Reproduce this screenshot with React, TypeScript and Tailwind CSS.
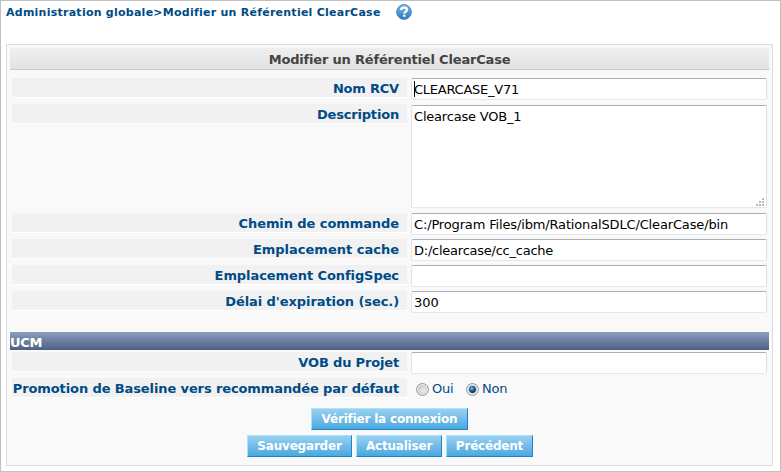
import type { ReactNode } from "react";

const inputBorder =
  "rounded-[2px] border border-t-[#abadb3] border-r-[#dbdfe6] border-b-[#e3e9ef] border-l-[#e2e3ea] bg-white text-[13px] text-black";

function Row({
  label,
  children,
  tall = false,
  tracking = "tracking-[-0.08px]",
}: {
  label: string;
  children: ReactNode;
  tall?: boolean;
  tracking?: string;
}) {
  return (
    <div className={`flex ${tall ? "h-[109px]" : "h-[26px]"}`}>
      <div
        className={`mr-1 h-5 w-[395px] shrink-0 border-b border-white bg-[#f1f1f1] pr-2 text-right text-[13px] leading-[22px] font-bold whitespace-nowrap text-[#004b85] ${tracking}`}
      >
        {label}
      </div>
      {children}
    </div>
  );
}

function Field({ value = "", caret = false, tracking = "" }: { value?: string; caret?: boolean; tracking?: string }) {
  return (
    <div className={`flex h-[22px] w-[356px] items-center pl-[2px] whitespace-pre ${inputBorder}`}>
      {caret && <span className="-mr-px h-4 w-px bg-black" />}
      <span className={`h-[17px] leading-[18px] ${tracking}`}>{value}</span>
    </div>
  );
}

function Button({ children, width }: { children: string; width: string }) {
  return (
    <button
      className={`h-[22px] border border-t-[#a9e4fa] border-r-[#1b86cb] border-b-[#1b86cb] border-l-[#a9e4fa] bg-linear-to-b from-[#99d0f0] to-[#48a8df] text-[12px] leading-[21px] font-bold tracking-[-0.2px] whitespace-nowrap text-white ${width}`}
    >
      {children}
    </button>
  );
}

function Radio({ id, checked = false }: { id: string; checked?: boolean }) {
  return (
    <svg width="13" height="13" viewBox="0 0 13 13">
      <defs>
        <linearGradient id={id} x1="0" y1="0" x2="1" y2="1">
          <stop offset="0" stopColor="#c4c8cc" />
          <stop offset="1" stopColor="#f8f8f8" />
        </linearGradient>
        <radialGradient id={`${id}-dot`} cx=".4" cy=".35" r=".65">
          <stop offset="0" stopColor="#7fd3f5" />
          <stop offset=".5" stopColor="#17679b" />
          <stop offset="1" stopColor="#0a2b48" />
        </radialGradient>
      </defs>
      <circle cx="6.5" cy="6.5" r="5.9" fill="#f7f7f7" stroke="#8b8c8d" strokeWidth="1" />
      <circle cx="6.5" cy="6.5" r="4" fill={`url(#${id})`} stroke="#b4b7ba" strokeWidth=".7" />
      {checked && <circle cx="6.5" cy="6.5" r="3.4" fill={`url(#${id}-dot)`} />}
    </svg>
  );
}

function HelpIcon() {
  return (
    <svg width="16" height="16" viewBox="0 0 16 16">
      <defs>
        <linearGradient id="help" x1="0" y1="0" x2="0" y2="1">
          <stop offset="0" stopColor="#80bae8" />
          <stop offset="1" stopColor="#2876bd" />
        </linearGradient>
      </defs>
      <circle cx="8" cy="8" r="7.4" fill="url(#help)" stroke="#4b8cc5" />
      <path d="M5 6.1C5.1 4.3 6.3 3.6 8 3.6c1.8 0 3 .8 3 2.2 0 1.9-2.6 1.8-2.6 3.7" fill="none" stroke="#fff" strokeWidth="2.2" />
      <rect x="7.1" y="10.6" width="2.4" height="2.2" fill="#fff" />
    </svg>
  );
}

function ResizeGrip() {
  return (
    <svg width="8" height="8" viewBox="0 0 8 8" fill="#b8b8b8">
      {[[6, 0], [3, 3], [6, 3], [0, 6], [3, 6], [6, 6]].map(([x, y]) => (
        <rect key={`${x}-${y}`} x={x} y={y} width="2" height="2" />
      ))}
    </svg>
  );
}

export default function App() {
  return (
    <div className="h-[472px] w-[781px] overflow-hidden border border-[#c0c0c0] bg-white pl-[5px] font-['DejaVu_Sans',Verdana,sans-serif]">
      <div className="flex h-[43px] items-start text-[11px] font-bold text-[#004b85]">
        <span className="mt-1 w-[390px] leading-4 tracking-[0.25px] whitespace-nowrap">Administration globale&gt;Modifier un Référentiel ClearCase</span>
        <div className="mt-[3px]"><HelpIcon /></div>
      </div>
      <div className="h-[422px] w-[767px] border border-[#dcdcdc] bg-[#f9f9f9] px-[3px] pt-[3px]">
        <h1 className="h-[22px] w-[759px] border-b border-[#c8c8c8] bg-linear-to-b from-[#efefef] to-[#e2e2e2] text-center text-[13px] leading-[24px] font-bold tracking-[-0.18px] text-[#444]">
          Modifier un Référentiel ClearCase
        </h1>
        <div className="mt-2 pl-[2px]">
          <Row label="Nom RCV" tracking="tracking-[-0.2px]"><Field value="CLEARCASE_V71" caret tracking="tracking-[-0.25px]" /></Row>
          <Row label="Description" tall tracking="tracking-[-0.18px]">
            <div className={`mt-px flex h-[103px] w-[356px] justify-between pl-[2px] ${inputBorder}`}>
              <span className="mt-[2px] leading-[18px] tracking-[-0.2px]">Clearcase VOB_1</span>
              <div className="self-end px-[2px] pb-px"><ResizeGrip /></div>
            </div>
          </Row>
          <Row label="Chemin de commande"><Field value="C:/Program Files/ibm/RationalSDLC/ClearCase/bin" tracking="tracking-[-0.15px]" /></Row>
          <Row label="Emplacement cache" tracking="tracking-[0px]"><Field value="D:/clearcase/cc_cache" tracking="tracking-[-0.24px]" /></Row>
          <Row label="Emplacement ConfigSpec"><Field /></Row>
          <Row label="Délai d'expiration (sec.)"><Field value="300" /></Row>
        </div>
        <h2 className="mt-[15px] mb-[2px] h-[18px] w-[759px] bg-linear-to-b from-[#8d9ebf] to-[#4d6185] text-[13px] leading-[21px] font-bold tracking-[-0.3px] text-white">UCM</h2>
        <div className="pl-[2px]">
          <Row label="VOB du Projet" tracking="tracking-[-0.16px]"><Field /></Row>
          <Row label="Promotion de Baseline vers recommandée par défaut" tracking="tracking-[-0.11px]">
            <div className="flex h-[22px] items-start pl-[5px] text-[13px] leading-[22px] tracking-[-0.2px] text-[#004b85]">
              <span className="mt-[5px] mr-[3px]"><Radio id="oui" /></span>
              <span className="w-[34px]">Oui</span>
              <span className="mt-[5px] mr-[3px]"><Radio id="non" checked /></span>
              <span>Non</span>
            </div>
          </Row>
        </div>
        <div className="mt-1 flex w-[759px] justify-center"><Button width="w-[157px]">Vérifier la connexion</Button></div>
        <div className="mt-[5px] flex w-[760px] justify-center gap-1">
          <Button width="w-[105px]">Sauvegarder</Button>
          <Button width="w-[86px]">Actualiser</Button>
          <Button width="w-[87px]">Précédent</Button>
        </div>
      </div>
    </div>
  );
}
